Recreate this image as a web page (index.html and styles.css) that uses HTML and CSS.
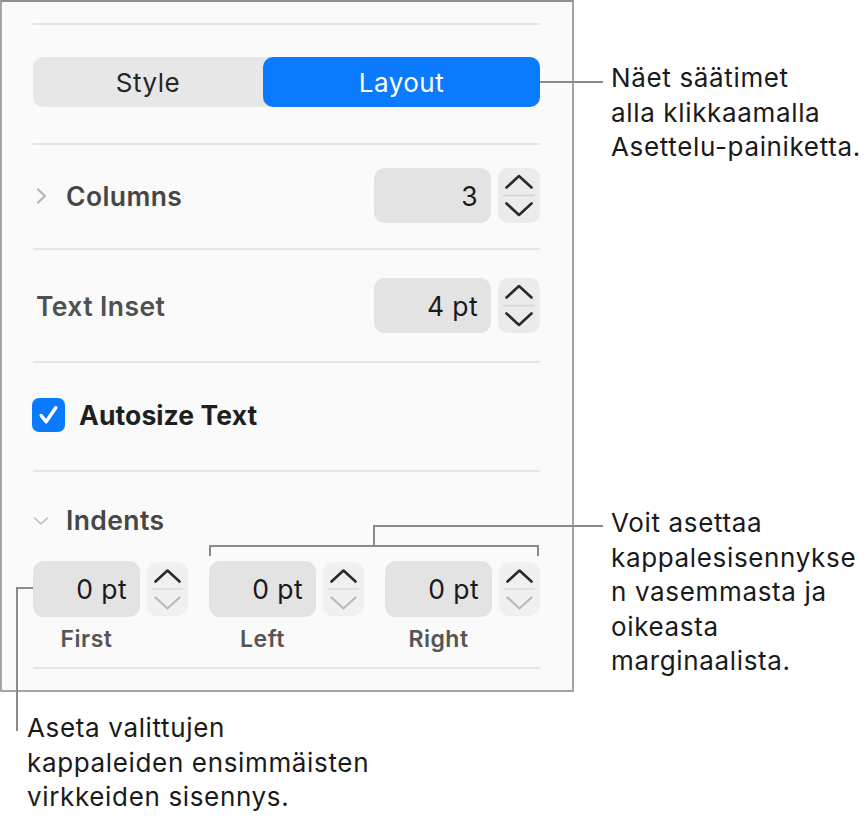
FILE: index.html
```html
<!DOCTYPE html>
<html lang="fi">
<head>
<meta charset="utf-8">
<title>Layout</title>
<link rel="stylesheet" href="styles.css">
</head>
<body>
<div class="page">
  <div class="panel">
    <div class="sep sep-top"></div>
    <div class="segmented">
      <div class="seg">Style</div>
      <div class="seg seg-active">Layout</div>
    </div>
    <div class="sep sep-2"></div>

    <div class="row row-columns">
      <div class="label-group">
        <svg class="disclosure-right" width="14" height="18" viewBox="0 0 14 18"><path d="M3 2.5 L10 9 L3 15.5" fill="none" stroke="#b3b3b3" stroke-width="2.2" stroke-linecap="round" stroke-linejoin="round"/></svg>
        <span class="label">Columns</span>
      </div>
      <div class="control">
        <div class="field field-wide">3</div>
        <div class="stepper">
          <svg width="42" height="55" viewBox="0 0 42 55"><path d="M8.5 19.5 L21 8 L33.5 19.5" fill="none" stroke="#2b2b2b" stroke-width="2.6" stroke-linecap="round" stroke-linejoin="round"/><line x1="5" y1="27.5" x2="37" y2="27.5" stroke="#d2d2d2" stroke-width="1.5"/><path d="M8.5 35.5 L21 47 L33.5 35.5" fill="none" stroke="#2b2b2b" stroke-width="2.6" stroke-linecap="round" stroke-linejoin="round"/></svg>
        </div>
      </div>
    </div>
    <div class="sep sep-3"></div>

    <div class="row row-inset">
      <span class="label label-inset">Text Inset</span>
      <div class="control">
        <div class="field field-wide">4 pt</div>
        <div class="stepper">
          <svg width="42" height="55" viewBox="0 0 42 55"><path d="M8.5 19.5 L21 8 L33.5 19.5" fill="none" stroke="#2b2b2b" stroke-width="2.6" stroke-linecap="round" stroke-linejoin="round"/><line x1="5" y1="27.5" x2="37" y2="27.5" stroke="#d2d2d2" stroke-width="1.5"/><path d="M8.5 35.5 L21 47 L33.5 35.5" fill="none" stroke="#2b2b2b" stroke-width="2.6" stroke-linecap="round" stroke-linejoin="round"/></svg>
        </div>
      </div>
    </div>
    <div class="sep sep-4"></div>

    <div class="row row-check">
      <div class="checkbox">
        <svg width="34" height="34" viewBox="0 0 34 34"><path d="M9.5 17.5 L14.5 24 L24.5 9.5" fill="none" stroke="#ffffff" stroke-width="3.6" stroke-linecap="round" stroke-linejoin="round"/></svg>
      </div>
      <span class="label label-strong">Autosize Text</span>
    </div>
    <div class="sep sep-5"></div>

    <div class="row row-indents">
      <svg class="disclosure-down" width="16" height="10" viewBox="0 0 16 10"><path d="M1.5 2 L8 8 L14.5 2" fill="none" stroke="#bdbdbd" stroke-width="1.6" stroke-linecap="round" stroke-linejoin="round"/></svg>
      <span class="label">Indents</span>
    </div>

    <div class="indent-grid">
      <div class="indent-col">
        <div class="indent-control">
          <div class="field">0 pt</div>
          <div class="stepper stepper-light">
            <svg width="41" height="54" viewBox="0 0 41 54"><path d="M8.5 19.5 L20.5 8.5 L32.5 19.5" fill="none" stroke="#2b2b2b" stroke-width="2.6" stroke-linecap="round" stroke-linejoin="round"/><line x1="5" y1="27" x2="36" y2="27" stroke="#dadada" stroke-width="1.5"/><path d="M8.5 35.5 L20.5 46.5 L32.5 35.5" fill="none" stroke="#b9b9b9" stroke-width="2.2" stroke-linecap="round" stroke-linejoin="round"/></svg>
          </div>
        </div>
        <div class="sub-label">First</div>
      </div>
      <div class="indent-col">
        <div class="indent-control">
          <div class="field">0 pt</div>
          <div class="stepper stepper-light">
            <svg width="41" height="54" viewBox="0 0 41 54"><path d="M8.5 19.5 L20.5 8.5 L32.5 19.5" fill="none" stroke="#2b2b2b" stroke-width="2.6" stroke-linecap="round" stroke-linejoin="round"/><line x1="5" y1="27" x2="36" y2="27" stroke="#dadada" stroke-width="1.5"/><path d="M8.5 35.5 L20.5 46.5 L32.5 35.5" fill="none" stroke="#b9b9b9" stroke-width="2.2" stroke-linecap="round" stroke-linejoin="round"/></svg>
          </div>
        </div>
        <div class="sub-label">Left</div>
      </div>
      <div class="indent-col">
        <div class="indent-control">
          <div class="field">0 pt</div>
          <div class="stepper stepper-light">
            <svg width="41" height="54" viewBox="0 0 41 54"><path d="M8.5 19.5 L20.5 8.5 L32.5 19.5" fill="none" stroke="#2b2b2b" stroke-width="2.6" stroke-linecap="round" stroke-linejoin="round"/><line x1="5" y1="27" x2="36" y2="27" stroke="#dadada" stroke-width="1.5"/><path d="M8.5 35.5 L20.5 46.5 L32.5 35.5" fill="none" stroke="#b9b9b9" stroke-width="2.2" stroke-linecap="round" stroke-linejoin="round"/></svg>
          </div>
        </div>
        <div class="sub-label">Right</div>
      </div>
    </div>
    <div class="sep sep-6"></div>
  </div>

  <!-- callout 1 -->
  <div class="line l1-h"></div>
  <div class="callout c1">Näet säätimet<br>alla klikkaamalla<br>Asettelu-painiketta.</div>

  <!-- callout 2 (bracket) -->
  <div class="line l2-top"></div>
  <div class="line l2-stem"></div>
  <div class="line l2-bracket"></div>
  <div class="line l2-tick-left"></div>
  <div class="line l2-tick-right"></div>
  <div class="callout c2">Voit asettaa<br>kappalesisennykse<br>n vasemmasta ja<br>oikeasta<br>marginaalista.</div>

  <!-- callout 3 -->
  <div class="line l3-h"></div>
  <div class="line l3-v"></div>
  <div class="callout c3">Aseta valittujen<br>kappaleiden ensimmäisten<br>virkkeiden sisennys.</div>
</div>
</body>
</html>
```

FILE: styles.css
```css
* { box-sizing: border-box; }

html, body {
  margin: 0;
  padding: 0;
  background: #ffffff;
}

body {
  font-family: "Inter", "Liberation Sans", sans-serif;
  color: #1c1c1c;
}

.page {
  position: relative;
  width: 867px;
  height: 822px;
  overflow: hidden;
}

/* ---------- panel ---------- */
.panel {
  width: 574px;
  height: 692px;
  background: #fafafa;
  border: 2px solid #a4a4a4;
  border-top-color: #8e8e8e;
  padding: 0 32px 0 31px;
  display: flex;
  flex-direction: column;
}

.sep {
  height: 2px;
  background: #e6e6e6;
  flex: none;
}
.sep-top { margin-top: 21px; }
.sep-2 { margin-top: 36px; }
.sep-3 { margin-top: 25px; }
.sep-4 { margin-top: 28px; }
.sep-5 { margin-top: 38px; }
.sep-6 { margin-top: 16px; }

/* segmented control */
.segmented {
  margin-top: 32px;
  height: 50px;
  display: grid;
  grid-template-columns: 230px 1fr;
  background: #e7e7e7;
  border-radius: 10px;
  flex: none;
}
.seg {
  display: flex;
  align-items: center;
  justify-content: center;
  font-size: 26px;
  letter-spacing: 0.5px;
  color: #262626;
}
.seg-active {
  background: #0a7aff;
  color: #ffffff;
  border-radius: 10px;
}

/* rows */
.row {
  display: flex;
  align-items: center;
  flex: none;
}
.row-columns {
  margin-top: 23px;
  height: 55px;
  justify-content: space-between;
}
.row-inset {
  margin-top: 28px;
  height: 55px;
  justify-content: space-between;
}
.row-check {
  margin-top: 35px;
  height: 34px;
}
.row-indents {
  margin-top: 33px;
  height: 30px;
}

.label-group {
  display: flex;
  align-items: center;
}
.disclosure-right {
  margin-left: 2px;
  margin-right: 17px;
}
.disclosure-down {
  margin-left: 0;
  margin-right: 17px;
  margin-top: 2px;
}

.label {
  font-size: 26.5px;
  letter-spacing: 0.4px;
  font-weight: 600;
  color: #464646;
}
.label-inset {
  margin-left: 3px;
  color: #505050;
}
.label-strong {
  color: #1f1f1f;
  margin-left: 14px;
  font-weight: 650;
  letter-spacing: 0.1px;
}

.control {
  display: flex;
  align-items: center;
  gap: 7px;
}

.field {
  height: 55px;
  background: #e3e3e3;
  border-radius: 11px;
  display: flex;
  align-items: center;
  justify-content: flex-end;
  padding-right: 13px;
  font-size: 26.5px;
  letter-spacing: 0.4px;
  color: #1a1a1a;
}
.field-wide { width: 117px; }

.stepper {
  width: 42px;
  height: 55px;
  background: #ebebeb;
  border-radius: 10px;
  display: flex;
}
.stepper-light {
  width: 41px;
  height: 54px;
  background: #f0f0f0;
}

.checkbox {
  width: 33px;
  height: 34px;
  margin-left: -1px;
  border-radius: 7px;
  background: #0a7aff;
  display: flex;
  align-items: center;
  justify-content: center;
}

/* indents */
.indent-grid {
  margin-top: 26px;
  display: grid;
  grid-template-columns: repeat(3, 1fr);
  column-gap: 21px;
  flex: none;
}
.indent-col {
  display: flex;
  flex-direction: column;
}
.indent-control {
  display: flex;
  align-items: center;
  gap: 7px;
}
.indent-control .field {
  flex: 1;
  height: 56px;
}
.sub-label {
  margin-top: 10px;
  width: calc(100% - 48px);
  text-align: center;
  font-size: 23px;
  letter-spacing: 0.5px;
  font-weight: 600;
  color: #555555;
  line-height: 24px;
}

/* ---------- callouts ---------- */
.line {
  position: absolute;
  background: #8b8b8b;
}
.l1-h { left: 540px; top: 81px; width: 63px; height: 2px; }

.l2-top { left: 373px; top: 525px; width: 230px; height: 2px; }
.l2-stem { left: 373px; top: 525px; width: 2px; height: 22px; }
.l2-bracket { left: 209px; top: 545px; width: 330px; height: 2px; }
.l2-tick-left { left: 209px; top: 545px; width: 2px; height: 11px; }
.l2-tick-right { left: 537px; top: 545px; width: 2px; height: 11px; }

.l3-h { left: 16px; top: 587px; width: 17px; height: 2px; }
.l3-v { left: 16px; top: 587px; width: 2px; height: 144px; }

.callout {
  position: absolute;
  font-size: 26px;
  letter-spacing: 0.65px;
  line-height: 34.6px;
  color: #1a1a1a;
  white-space: nowrap;
}
.c1 { left: 611px; top: 61px; }
.c2 { left: 611px; top: 506px; }
.c3 { left: 27px; top: 711px; }
```
